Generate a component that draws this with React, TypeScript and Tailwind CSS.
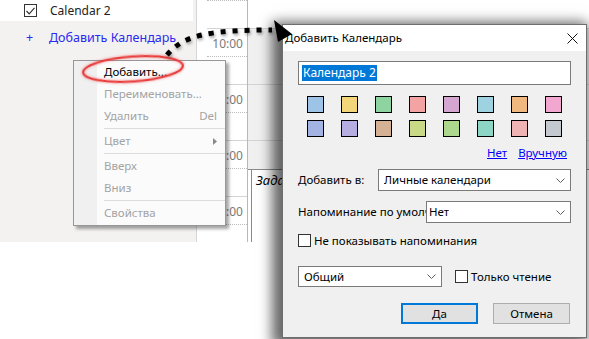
import type { ReactNode } from "react";

const font = "font-['Noto_Sans','Liberation_Sans',sans-serif]";

const swatchRows = [
  ["#9dc3e6", "#f3d57a", "#8ed4a0", "#f4a3a3", "#d5a6d0", "#9ed2e0", "#f0b87f", "#f1a7cf"],
  ["#a3b3e3", "#b6aee0", "#d4b094", "#c8da86", "#acd78c", "#8dd6c5", "#f0b3b3", "#c4c8cf"],
];

// half-hour slots of the day view, starting just above the top edge
const slots = [
  { solid: false },
  { solid: true },
  { solid: false, label: "10:00" },
  { solid: true },
  { solid: false, label: "11:00" },
  { solid: true },
  { solid: false, label: "12:00" },
  { solid: true },
  { solid: false, label: "13:00" },
  { solid: true },
];

type MenuItem = { label: string; enabled?: boolean; shortcut?: string; sub?: boolean } | "sep";

const menuItems: MenuItem[] = [
  { label: "Добавить...", enabled: true },
  { label: "Переименовать..." },
  { label: "Удалить", shortcut: "Del" },
  "sep",
  { label: "Цвет", sub: true },
  "sep",
  { label: "Вверх" },
  { label: "Вниз" },
  "sep",
  { label: "Свойства" },
];

function Chevron() {
  return (
    <svg width="9" height="5" viewBox="0 0 9 5" className="shrink-0">
      <polyline points="0.5,0.5 4.5,4.5 8.5,0.5" fill="none" stroke="#606060" strokeWidth="1" />
    </svg>
  );
}

function Select({ children, className }: { children: ReactNode; className: string }) {
  return (
    <div className={`flex items-center justify-between border border-[#7a7a7a] bg-white pr-[5px] ${className}`}>
      <span className="truncate">{children}</span>
      <Chevron />
    </div>
  );
}

function CheckBox({ checked }: { checked?: boolean }) {
  return (
    <div className="flex h-[13px] w-[13px] shrink-0 items-center justify-center border border-[#333] bg-white">
      {checked && (
        <svg width="9" height="8" viewBox="0 0 9 8">
          <polyline points="0.5,4 3.2,6.8 8.5,0.8" fill="none" stroke="#333" strokeWidth="1.2" />
        </svg>
      )}
    </div>
  );
}

function ContextMenu() {
  return (
    <div className="absolute left-[73px] top-[60px] flex w-[153px] border border-[#979797] bg-[#fbfbfb] text-[11.5px] shadow-[3px_3px_3px_rgba(0,0,0,0.35)]">
      <div className="w-[23px] bg-[#f0f0f0]" />
      <div className="flex-1 pb-[1px]">
        {menuItems.map((item, i) =>
          item === "sep" ? (
            <div key={i} className="flex h-[3px] items-center pl-[7px]">
              <div className="h-px w-full bg-[#dcdcdc]" />
            </div>
          ) : (
            <div
              key={i}
              className={`flex h-[22px] items-center justify-between pl-[7px] pr-[8px] ${item.enabled ? "text-black" : "text-[#a3a3a3]"}`}
            >
              <span>{item.label}</span>
              {item.shortcut && <span>{item.shortcut}</span>}
              {item.sub && (
                <svg width="4" height="7" viewBox="0 0 4 7">
                  <polygon points="0,0 4,3.5 0,7" fill="#8a8a8a" />
                </svg>
              )}
            </div>
          ),
        )}
      </div>
    </div>
  );
}

function AddCalendarDialog() {
  return (
    <div className="absolute left-[282px] top-[24px] flex h-[314px] w-[305px] flex-col border border-[#6e6e6e] bg-[#f0f0f0] text-[11.5px] text-black shadow-[-5px_3px_12px_5px_rgba(0,0,0,0.6)]">
      <div className="flex h-[26px] items-center justify-between bg-white pl-[2px] pr-[8px]">
        <span>Добавить Календарь</span>
        <svg width="11" height="11" viewBox="0 0 11 11">
          <path d="M0.5 0.5 L10.5 10.5 M10.5 0.5 L0.5 10.5" stroke="#111" strokeWidth="1" />
        </svg>
      </div>

      <div className="flex flex-col px-[15px]">
        <div className="mt-[10px] flex h-[24px] items-center border border-[#7a7a7a] bg-white pl-[3px]">
          <span className="bg-[#0078d7] px-[1px] text-[12px] leading-[16px] text-white">Календарь 2</span>
        </div>

        <div className="ml-[9px] mt-[11px] flex flex-col gap-[7px]">
          {swatchRows.map((row, r) => (
            <div key={r} className="flex gap-[17px]">
              {row.map((c) => (
                <div key={c} className="h-[17px] w-[17px] border border-black" style={{ backgroundColor: c }} />
              ))}
            </div>
          ))}
        </div>

        <div className="mt-[8px] flex justify-end gap-[11px] pr-[4px] leading-[16px] text-[#0000ff]">
          <span className="underline">Нет</span>
          <span className="underline">Вручную</span>
        </div>

        <div className="mt-[8px] flex h-[22px] items-center">
          <span className="w-[80px]">Добавить в:</span>
          <Select className="h-[22px] flex-1 pl-[5px]">Личные календари</Select>
        </div>

        <div className="mt-[10px] flex h-[22px] items-center">
          <span className="w-[128px] overflow-hidden whitespace-nowrap">Напоминание по умолчанию</span>
          <Select className="h-[22px] flex-1 pl-[2px]">Нет</Select>
        </div>

        <div className="mt-[11px] flex h-[13px] items-center gap-[3px]">
          <CheckBox />
          <span className="leading-[13px]">Не показывать напоминания</span>
        </div>

        <div className="mt-[19px] flex h-[21px] items-center">
          <Select className="h-[21px] w-[144px] pl-[5px]">Общий</Select>
          <div className="ml-[13px] flex items-center gap-[3px]">
            <CheckBox />
            <span>Только чтение</span>
          </div>
        </div>

        <div className="mt-[16px] flex justify-end gap-[15px] pr-[1px]">
          <div className="flex h-[21px] w-[77px] items-center justify-center border-2 border-[#0078d7] bg-[#e1e1e1]">Да</div>
          <div className="flex h-[21px] w-[77px] items-center justify-center border border-[#adadad] bg-[#e1e1e1]">Отмена</div>
        </div>
      </div>
    </div>
  );
}

export default function App() {
  return (
    <div className={`relative h-[339px] w-[589px] overflow-hidden bg-white ${font}`}>
      {/* calendar app in the background */}
      <div className="flex h-[242px]">
        <aside className="w-[197px] border-r border-[#d6d6d6] bg-[#f3f2f1]">
          <div className="mr-[3px] flex h-[21px] items-center gap-[13px] bg-white pl-[24px] text-[12px] text-[#222]">
            <CheckBox checked />
            <span>Calendar 2</span>
          </div>
          <div className="mt-[8px] flex items-center text-[12.5px] text-[#2a2af0]">
            <span className="w-[49px] pl-[26px]">+</span>
            <span>Добавить Календарь</span>
          </div>
        </aside>

        <div className="w-[50px] overflow-hidden bg-white">
          <div className="mt-[-27px]">
            {slots.map((s, i) => (
              <div
                key={i}
                className={`ml-[10px] flex h-[28px] items-start justify-end pr-[4px] pt-[8px] text-[12px] leading-[14px] text-[#7a7a7a] ${s.solid ? "border-b border-[#d4d4d4]" : "border-b border-dotted border-[#bdbdbd]"}`}
              >
                {s.label}
              </div>
            ))}
          </div>
        </div>

        <div className="flex flex-1 flex-col border-l border-[#b8b8b8] bg-[#f0f0f0]">
          <div className="h-[29px] border-b border-[#d4d4d4] bg-white" />
          <div className="h-[56px] border-b border-[#d4d4d4]" />
          <div className="h-[56px] border-b border-[#d4d4d4]" />
          <div className="h-[28px]" />
          <div className="flex flex-1 border-t border-[#8a8a8a] bg-white">
            <div className="w-[4px] border-r border-[#8a8a8a]" />
            <span className="pl-[4px] pt-[2px] text-[13px] italic leading-[16px]">Задача</span>
          </div>
        </div>
      </div>

      <ContextMenu />

      {/* red highlight round the first menu item */}
      <svg className="pointer-events-none absolute left-0 top-0" width="589" height="339">
        <ellipse
          cx="133"
          cy="69"
          rx="50"
          ry="12.5"
          transform="rotate(-4 133 69)"
          fill="none"
          stroke="#e83a3a"
          strokeWidth="2"
          style={{ filter: "drop-shadow(0 0 1.5px rgba(232,58,58,0.6))" }}
        />
        <g style={{ filter: "drop-shadow(1px 2px 1.5px rgba(0,0,0,0.35))" }}>
          <path d="M167 55 C 183 36, 205 30, 272 30" fill="none" stroke="#000" strokeWidth="5" strokeDasharray="5 7" />
        </g>
      </svg>

      <AddCalendarDialog />

      {/* arrow head sits over the dialog's corner */}
      <svg className="pointer-events-none absolute left-0 top-0" width="589" height="339">
        <polygon points="274,20 292,34 278,42" fill="#000" />
      </svg>
    </div>
  );
}
